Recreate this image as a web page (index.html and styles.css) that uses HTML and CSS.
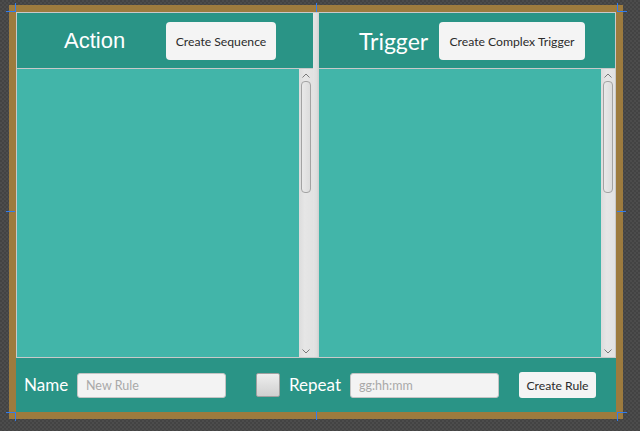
FILE: index.html
```html
<!DOCTYPE html>
<html>
<head>
<meta charset="utf-8">
<link rel="stylesheet" href="styles.css">
</head>
<body>
<div class="stage">
  <div class="frame">
    <div class="split">
      <section class="pane pane-action">
        <header class="pane-head">
          <span class="pane-title">Action</span>
          <button class="btn btn-head">Create Sequence</button>
        </header>
        <div class="list">
          <div class="list-body"></div>
          <div class="vscroll">
            <div class="arrow"><svg width="8" height="5" viewBox="0 0 8 5"><path d="M0.5 4.5 L4 1 L7.5 4.5" fill="none" stroke="#7a7a7a" stroke-width="1"/></svg></div>
            <div class="track"><div class="thumb"></div></div>
            <div class="arrow"><svg width="8" height="5" viewBox="0 0 8 5"><path d="M0.5 0.5 L4 4 L7.5 0.5" fill="none" stroke="#7a7a7a" stroke-width="1"/></svg></div>
          </div>
        </div>
      </section>
      <div class="divider"></div>
      <section class="pane pane-trigger">
        <header class="pane-head">
          <span class="pane-title">Trigger</span>
          <button class="btn btn-head">Create Complex Trigger</button>
        </header>
        <div class="list">
          <div class="list-body"></div>
          <div class="vscroll">
            <div class="arrow"><svg width="8" height="5" viewBox="0 0 8 5"><path d="M0.5 4.5 L4 1 L7.5 4.5" fill="none" stroke="#7a7a7a" stroke-width="1"/></svg></div>
            <div class="track"><div class="thumb"></div></div>
            <div class="arrow"><svg width="8" height="5" viewBox="0 0 8 5"><path d="M0.5 0.5 L4 4 L7.5 0.5" fill="none" stroke="#7a7a7a" stroke-width="1"/></svg></div>
          </div>
        </div>
      </section>
    </div>
    <footer class="bar">
      <span class="bar-label label-name">Name</span>
      <input class="field field-name" type="text" placeholder="New Rule">
      <span class="check"></span>
      <span class="bar-label label-repeat">Repeat</span>
      <input class="field field-time" type="text" placeholder="gg:hh:mm">
      <button class="btn btn-rule">Create Rule</button>
    </footer>
  </div>
  <span class="mark mark-tl"></span>
  <span class="mark mark-tm"></span>
  <span class="mark mark-tr"></span>
  <span class="mark mark-bl"></span>
  <span class="mark mark-bm"></span>
  <span class="mark mark-br"></span>
  <span class="mark mark-ml"></span>
  <span class="mark mark-mr"></span>
</div>
</body>
</html>
```

FILE: styles.css
```css
html, body {
  margin: 0;
  padding: 0;
}

body {
  width: 640px;
  height: 431px;
  overflow: hidden;
  background-color: #474747;
  background-image: repeating-conic-gradient(#4c4c4c 0 25%, #434343 0 50%);
  background-size: 4px 4px;
  font-family: Lato, "Open Sans", sans-serif;
}

.stage {
  position: relative;
  box-sizing: border-box;
  height: 431px;
  padding: 5px 0 0 9px;
}

.frame {
  box-sizing: border-box;
  width: 614px;
  height: 414px;
  padding: 7px;
  background: #9d7b3e;
  display: flex;
  flex-direction: column;
}

.split {
  box-sizing: border-box;
  height: 346px;
  border: 1px solid #c9c9c9;
  display: flex;
}

.pane {
  width: 296px;
  display: flex;
  flex-direction: column;
}

.pane-head {
  height: 55px;
  flex: none;
  background: #2a9486;
  display: flex;
  align-items: center;
}

.pane-title {
  color: #ffffff;
  font-size: 23px;
  line-height: 30px;
  white-space: nowrap;
}

.pane-action .pane-head {
  padding-left: 47px;
}

.pane-action .pane-title {
  font-family: "Liberation Sans", Arial, sans-serif;
  font-size: 22px;
  width: 61px;
  margin-right: 41px;
}

.pane-trigger .pane-head {
  padding-left: 40px;
}

.pane-trigger .pane-title {
  font-size: 23px;
  width: 70px;
  margin-right: 10px;
}

.btn {
  font-family: Lato, "Open Sans", sans-serif;
  border: none;
  background: #f4f4f4;
  color: #2b2b2b;
  font-size: 12.2px;
  padding: 0;
  margin: 0;
  white-space: nowrap;
}

.btn-head {
  height: 38px;
  border-radius: 4px;
  margin-top: 1px;
}

.pane-action .btn-head {
  width: 110px;
}

.pane-trigger .btn-head {
  width: 146px;
}

.list {
  flex: 1;
  border-top: 1px solid #c9c9c9;
  background: #42b5a9;
  display: flex;
}

.list-body {
  flex: 1;
}

.vscroll {
  width: 14px;
  background: linear-gradient(to right, #dcdcdc, #e6e6e6 40%, #e2e2e2);
  display: flex;
  flex-direction: column;
}

.arrow {
  height: 12px;
  display: flex;
  align-items: center;
  justify-content: center;
}

.track {
  flex: 1;
  padding: 0 2px;
}

.thumb {
  box-sizing: border-box;
  height: 112px;
  border: 1px solid #a3a3a3;
  border-radius: 4px;
  background: linear-gradient(to right, #e9e9e9, #dcdcdc);
}

.divider {
  box-sizing: border-box;
  width: 6px;
  background: linear-gradient(to right, #e4e4e4, #dedede 60%, #cfcfcf);
}

.bar {
  flex: 1;
  background: #2a9486;
  display: flex;
  align-items: center;
  padding-left: 8px;
}

.bar-label {
  color: #ffffff;
  font-size: 17px;
  line-height: 24px;
  white-space: nowrap;
}

.label-name {
  width: 45px;
  margin-right: 8px;
}

.label-repeat {
  width: 51px;
  margin-right: 10px;
}

.field {
  box-sizing: border-box;
  width: 149px;
  height: 25px;
  border: 1px solid #c4c4c4;
  border-radius: 3px;
  background: #f3f3f3;
  padding: 0 8px;
  font-family: Lato, "Open Sans", sans-serif;
  font-size: 12.5px;
  color: #333;
  outline: none;
}

.field::placeholder {
  color: #a9a9a9;
}

.field-name {
  margin-right: 30px;
}

.field-time {
  margin-right: 20px;
}

.check {
  box-sizing: border-box;
  width: 24px;
  height: 24px;
  border: 1px solid #a0a0a0;
  border-radius: 2px;
  background: linear-gradient(to bottom, #eeeeee, #d0d0d0);
  margin-right: 9px;
}

.btn-rule {
  width: 77px;
  height: 26px;
  border-radius: 3px;
}

.mark {
  position: absolute;
  border-color: #2f7cf0;
  border-style: solid;
  border-width: 0;
}

.mark-tl {
  left: 6px;
  top: 3px;
  width: 9px;
  height: 8px;
  border-right-width: 1px;
  border-bottom-width: 1px;
}

.mark-tr {
  left: 617px;
  top: 3px;
  width: 9px;
  height: 8px;
  border-left-width: 1px;
  border-bottom-width: 1px;
}

.mark-bl {
  left: 6px;
  top: 412px;
  width: 9px;
  height: 8px;
  border-right-width: 1px;
  border-top-width: 1px;
}

.mark-br {
  left: 617px;
  top: 412px;
  width: 9px;
  height: 8px;
  border-left-width: 1px;
  border-top-width: 1px;
}

.mark-tm {
  left: 316px;
  top: 3px;
  width: 0;
  height: 9px;
  border-left-width: 1px;
}

.mark-bm {
  left: 316px;
  top: 411px;
  width: 0;
  height: 9px;
  border-left-width: 1px;
}

.mark-ml {
  left: 6px;
  top: 211px;
  width: 9px;
  height: 0;
  border-top-width: 1px;
}

.mark-mr {
  left: 617px;
  top: 211px;
  width: 9px;
  height: 0;
  border-top-width: 1px;
}
```
